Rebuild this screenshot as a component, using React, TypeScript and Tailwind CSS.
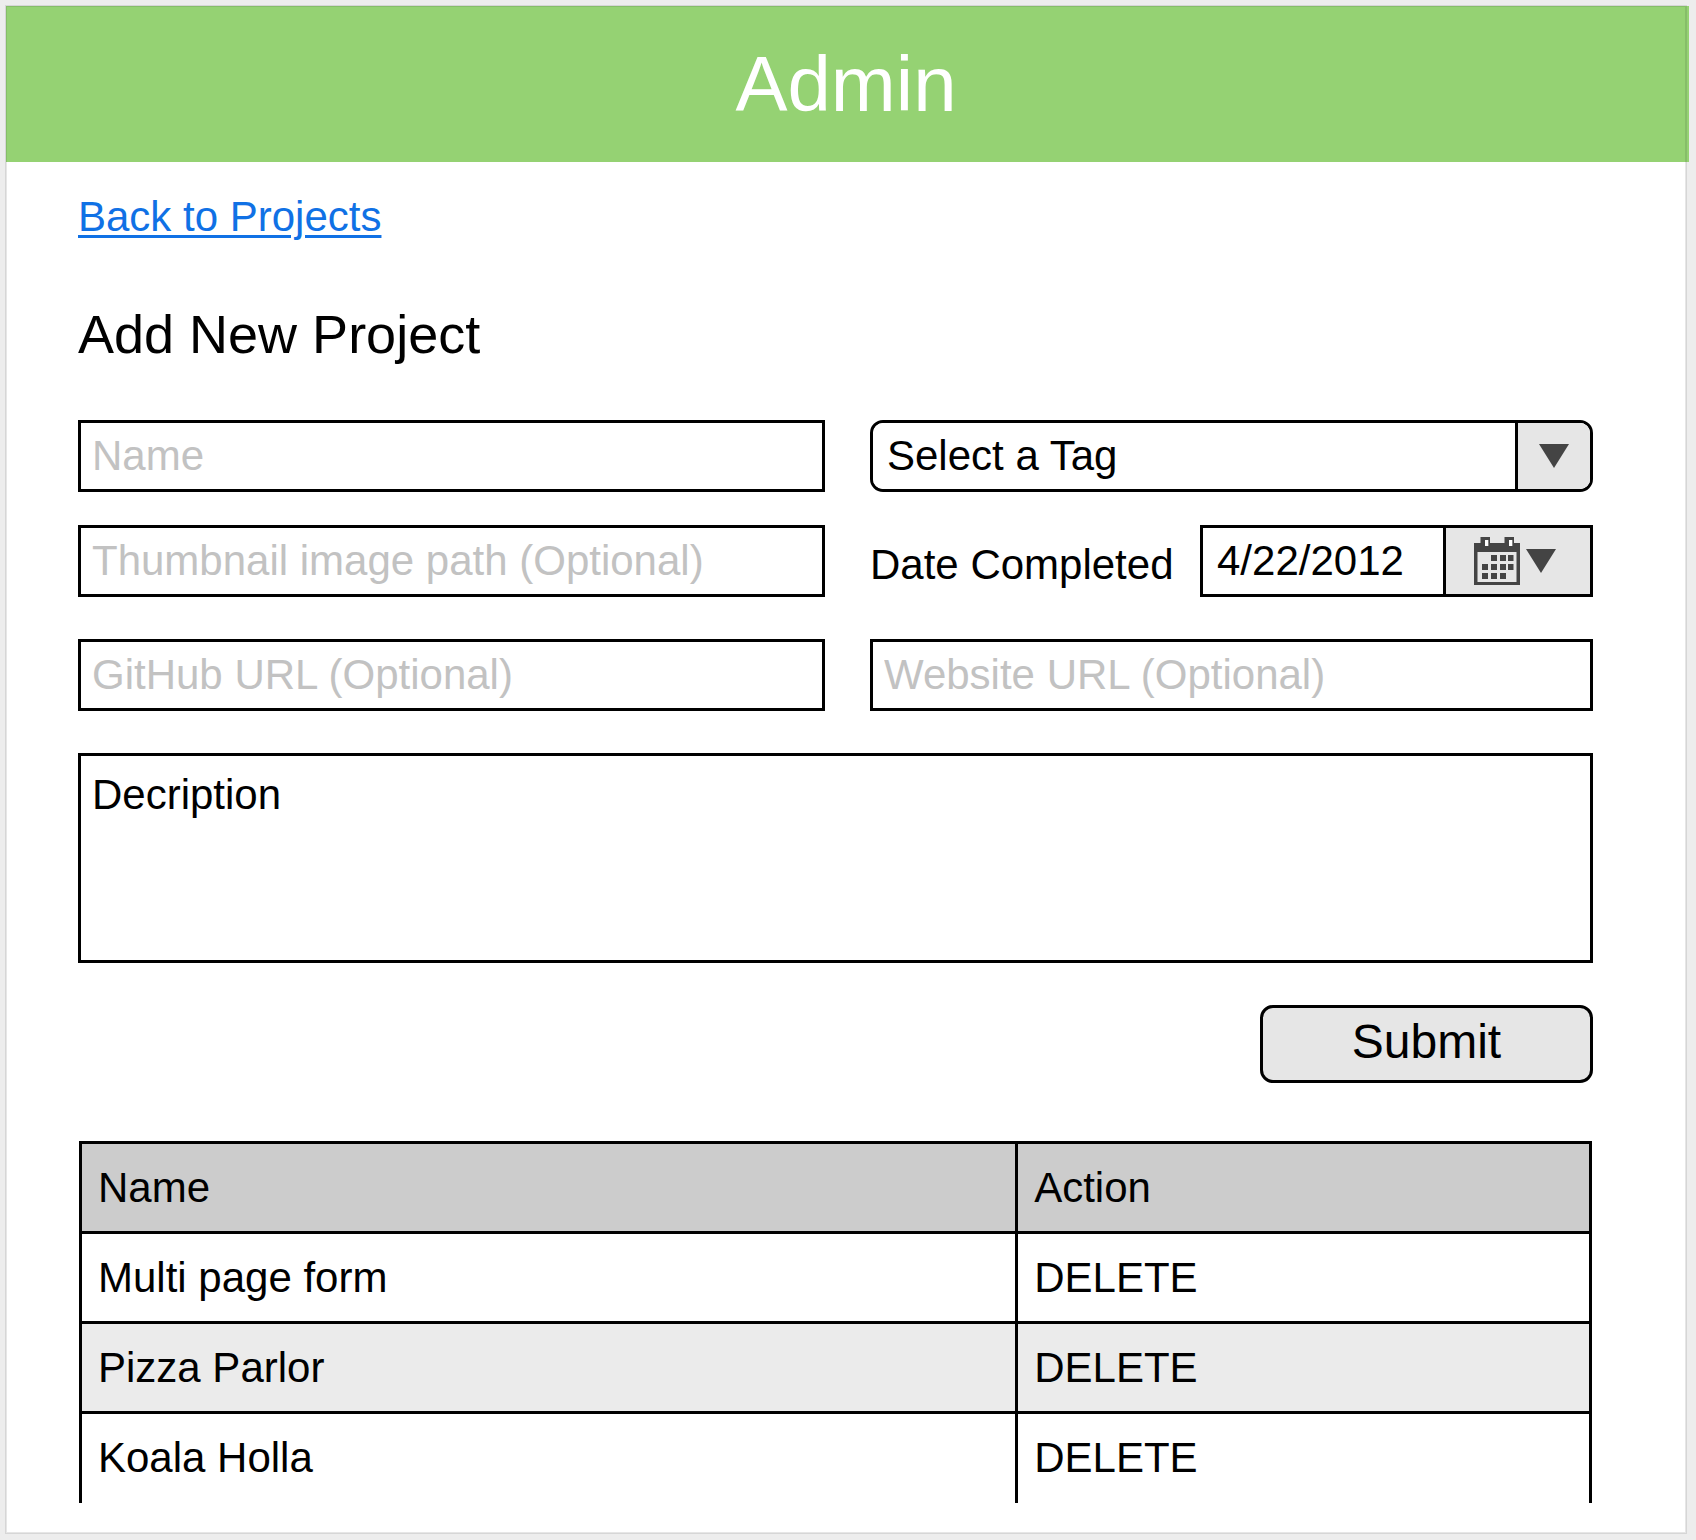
import React from "react";

const projects = ["Multi page form", "Pizza Parlor", "Koala Holla"];

const fieldClass =
  "block h-[72px] w-full min-w-0 rounded-none border-[3px] border-black bg-white px-[11px] text-[42px] leading-[48px] text-black outline-none placeholder:text-[#c2c2c2] placeholder:opacity-100";

function TextField({ label, type = "text" }: { label: string; type?: string }) {
  return <input type={type} aria-label={label} placeholder={label} className={fieldClass} />;
}

function Triangle() {
  return (
    <svg width="30" height="24" viewBox="0 0 30 24" aria-hidden="true" className="shrink-0">
      <path d="M0 0H30L15 24Z" fill="#444" />
    </svg>
  );
}

function CalendarIcon() {
  return (
    <svg width="46" height="48" viewBox="0 0 46 48" aria-hidden="true" className="shrink-0">
      <path
        fill="#444"
        fillRule="evenodd"
        d="M0 6H6.5V0H16V6H30.5V0H40V6H46V48H0ZM3.5 15V45H42.5V15ZM11 3V9H14.2V3ZM35 3V9H38.2V3Z"
      />
      <path fill="#fff" d="M11 3H14.2V9H11ZM35 3H38.2V9H35Z" />
      <path
        fill="#444"
        d="M17 18h6v6h-6zM26 18h6v6h-6zM34 18h5.5v6h-5.5zM8 27h6v6h-6zM17 27h6v6h-6zM26 27h6v6h-6zM34 27h5.5v6h-5.5zM8 36h6v6h-6zM17 36h6v6h-6zM26 36h6v6h-6z"
      />
    </svg>
  );
}

function TagSelect() {
  return (
    <div className="relative h-[72px] overflow-hidden rounded-[13px] border-[3px] border-black bg-white">
      <select
        aria-label="Tag"
        className="h-full w-full appearance-none bg-white pr-20 pl-3.5 text-[42px] leading-[48px] text-black outline-none"
      >
        <option>Select a Tag</option>
      </select>
      <span className="pointer-events-none absolute inset-y-0 right-0 flex w-[75px] items-center justify-center border-l-[3px] border-black bg-[#e6e6e6]">
        <Triangle />
      </span>
    </div>
  );
}

function DateField() {
  return (
    <div className="flex items-center justify-between">
      <label htmlFor="date-completed" className="pt-2 text-[42px] leading-[48px] whitespace-nowrap">
        Date Completed
      </label>
      <div className="flex h-[72px] w-[393px] shrink-0 border-[3px] border-black bg-white">
        <input
          id="date-completed"
          type="text"
          defaultValue="4/22/2012"
          className="h-full min-w-0 flex-1 bg-white pl-3.5 text-[42px] leading-[48px] text-black outline-none"
        />
        <button
          type="button"
          aria-label="Choose date"
          className="flex w-[147px] items-center justify-center gap-1.5 border-l-[3px] border-black bg-[#e6e6e6] pr-1.5"
        >
          <CalendarIcon />
          <Triangle />
        </button>
      </div>
    </div>
  );
}

function ProjectTable() {
  const cell = "h-[90px] border-[3px] border-black py-0 pr-4 pl-4 text-left font-normal";
  return (
    <div className="mt-[58px] px-px">
      <table className="w-full table-fixed border-collapse text-[42px] leading-[48px]">
        <thead>
          <tr className="bg-[#ccc]">
            <th scope="col" className={`${cell} w-[62%]`}>
              Name
            </th>
            <th scope="col" className={cell}>
              Action
            </th>
          </tr>
        </thead>
        <tbody>
          {projects.map((name) => (
            <tr key={name} className="odd:bg-white even:bg-[#ebebeb] last:[&>td]:border-b-0">
              <td className={cell}>{name}</td>
              <td className={cell}>
                <button type="button" className="block">
                  DELETE
                </button>
              </td>
            </tr>
          ))}
        </tbody>
      </table>
    </div>
  );
}

export default function App() {
  return (
    <div className="flex min-h-screen flex-col bg-[#ededed] pt-[5px] pr-[9px] pb-1.5 pl-[5px] font-['Liberation_Sans',Arial,sans-serif] text-black">
      <div className="flex-1 border border-[#d6d6d6] bg-white shadow-[inset_-1px_-1px_0_#e6e6e6,inset_1px_0_0_#e6e6e6]">
        <header className="-mr-[3px] bg-[#95d273] pr-0.5">
          <div className="flex h-[156px] items-center justify-center border-t border-r-2 border-l border-[#86bd69] pb-0.5">
            <h1 className="text-[78px] leading-[90px] text-white">Admin</h1>
          </div>
        </header>
        <main className="pt-[31px] pr-[93px] pl-[72px]">
          <a
            href="#projects"
            className="inline-block text-[42px] leading-[48px] text-[#1071e5] underline decoration-[3px] underline-offset-[4px]"
          >
            Back to Projects
          </a>
          <h2 className="mt-[61px] text-[54px] leading-[64px]">Add New Project</h2>
          <form className="mt-[54px]" onSubmit={(e) => e.preventDefault()}>
            <div className="grid grid-cols-[747fr_723fr] gap-x-[45px]">
              <TextField label="Name" />
              <TagSelect />
              <div className="mt-[33px]">
                <TextField label="Thumbnail image path (Optional)" />
              </div>
              <div className="mt-[33px]">
                <DateField />
              </div>
              <div className="mt-[42px]">
                <TextField label="GitHub URL (Optional)" />
              </div>
              <div className="mt-[42px]">
                <TextField label="Website URL (Optional)" />
              </div>
            </div>
            <textarea
              aria-label="Description"
              defaultValue="Decription"
              className="mt-[42px] block h-[210px] w-full resize-none rounded-none border-[3px] border-black bg-white px-[11px] py-[15px] text-[42px] leading-[48px] outline-none"
            />
            <div className="mt-[42px] flex justify-end">
              <button
                type="submit"
                className="h-[78px] w-[333px] rounded-[13px] border-[3px] border-black bg-[#e6e6e6] pb-1 text-[48px] leading-[56px]"
              >
                Submit
              </button>
            </div>
          </form>
          <ProjectTable />
        </main>
      </div>
    </div>
  );
}
